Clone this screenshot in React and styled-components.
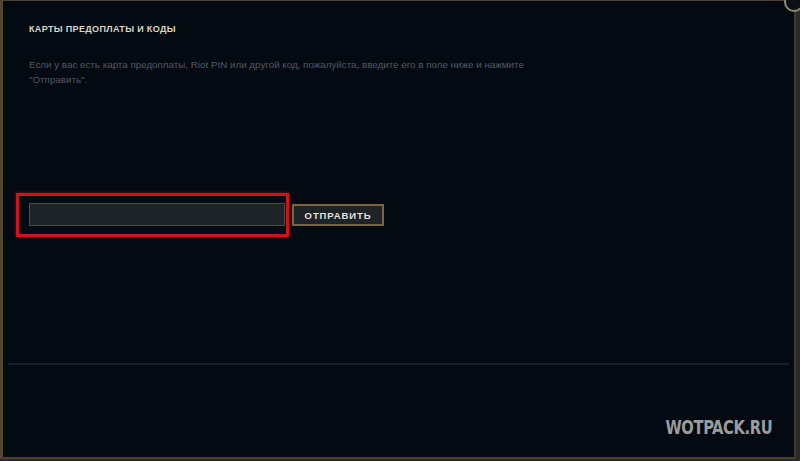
import styled, { createGlobalStyle } from "styled-components";

const GlobalStyle = createGlobalStyle`
  html, body {
    margin: 0;
    padding: 0;
    background: #2b2a25;
    font-family: "Liberation Sans", Arial, sans-serif;
  }
`;

const App = () => {
  return (
    <>
      <GlobalStyle />
      <Frame>
        <CloseButton />
        <Content>
          <Title>Карты предоплаты и коды</Title>
          <Description>
            Если у вас есть карта предоплаты, Riot PIN или другой код,
            пожалуйста, введите его в поле ниже и нажмите "Отправить".
          </Description>
          <FormRow>
            <Highlight>
              <CodeInput />
            </Highlight>
            <SubmitButton>Отправить</SubmitButton>
          </FormRow>
        </Content>
        <Divider />
        <Footer />
        <Watermark>WOTPACK.RU</Watermark>
      </Frame>
    </>
  );
};
export default App;

const Frame = styled.div`
  position: relative;
  box-sizing: border-box;
  width: 796px;
  height: 459px;
  background: #040a12;
  border-top: 1px solid #4a4330;
  border-left: 3px solid #4f4732;
  border-right: 2px solid #3f3a2c;
  border-bottom: 2px solid #4a4330;
  display: flex;
  flex-direction: column;
`;

const CloseButton = styled.div`
  position: absolute;
  top: -9px;
  right: -10px;
  width: 16px;
  height: 16px;
  border-radius: 50%;
  border: 2px solid #8c8878;
  background: #0b1016;
`;

const Content = styled.div`
  padding: 22px 0 0 26px;
  display: flex;
  flex-direction: column;
`;

const Title = styled.h1`
  margin: 0;
  font-size: 9px;
  line-height: 12px;
  font-weight: 700;
  letter-spacing: 0.35px;
  text-transform: uppercase;
  color: #dcd6c4;
`;

const Description = styled.p`
  margin: 22px 0 0;
  max-width: 520px;
  font-size: 9.8px;
  line-height: 15px;
  color: #535961;
`;

const FormRow = styled.div`
  margin: 106px 0 0 -13px;
  display: flex;
  align-items: center;
  gap: 3px;
`;

const Highlight = styled.div`
  box-sizing: border-box;
  width: 273px;
  height: 44px;
  padding: 7px 1px 8px 10px;
  border: 3px solid #d0121c;
  box-shadow: 0 0 3px rgba(220, 20, 30, 0.6);
  display: flex;
`;

const CodeInput = styled.input`
  box-sizing: border-box;
  width: 256px;
  height: 23px;
  background: #1e2328;
  border: 1px solid #4d4c40;
  outline: none;
`;

const SubmitButton = styled.button`
  box-sizing: border-box;
  width: 92px;
  height: 22px;
  padding: 0;
  background: #1e2328;
  border: 2px solid #7a6540;
  font-family: "Liberation Sans", Arial, sans-serif;
  font-size: 9.5px;
  font-weight: 700;
  letter-spacing: 0.9px;
  text-transform: uppercase;
  color: #e6e2d6;
`;

const Divider = styled.div`
  margin: auto 5px 0 5px;
  height: 2px;
  background: #16202a;
`;

const Footer = styled.div`
  height: 92px;
`;

const Watermark = styled.div`
  position: absolute;
  right: 22px;
  bottom: 19px;
  font-family: "DejaVu Sans Condensed", "DejaVu Sans", sans-serif;
  font-size: 19px;
  font-weight: 700;
  letter-spacing: -0.4px;
  color: #9c9c9c;
  transform: scaleX(0.86);
  transform-origin: right center;
`;
